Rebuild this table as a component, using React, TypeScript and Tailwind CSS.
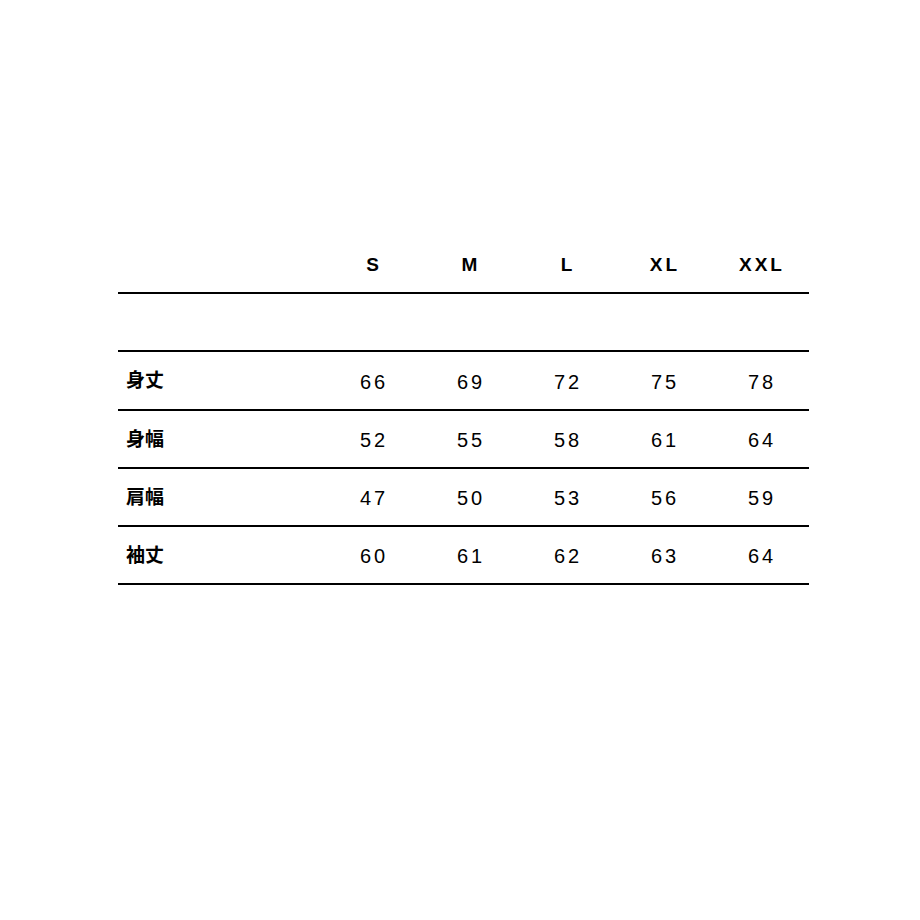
import React from "react";

const sizes = ["S", "M", "L", "XL", "XXL"];
const rows: [string, number[], string][] = [
  ["身丈", [66, 69, 72, 75, 78], "h-[59px]"],
  ["身幅", [52, 55, 58, 61, 64], "h-[58px]"],
  ["肩幅", [47, 50, 53, 56, 59], "h-[58px]"],
  ["袖丈", [60, 61, 62, 63, 64], "h-[58px]"],
];

export default function App() {
  return (
    <div
      className="w-[920px] h-[920px] bg-white text-black"
      style={{ fontFamily: '"Liberation Sans", "Noto Sans CJK JP", sans-serif' }}
    >
      <div className="pt-[236px] pl-[118px]">
        <div className="w-[691px]">
          <div className="flex h-[58px] items-center border-b-2 border-black pt-[2px]">
            <div className="w-[206px]" />
            {sizes.map((s) => (
              <div key={s} className="w-[97px] text-center text-[19px] font-bold tracking-[3px] pl-[3px]">
                {s}
              </div>
            ))}
          </div>
          <div className="h-[58px] border-b-2 border-black" />
          {rows.map(([label, vals, h]) => (
            <div key={label} className={`flex ${h} items-center border-b-2 border-black pt-[2px]`}>
              <div className="w-[206px] pl-[8px] text-[19px] font-bold">{label}</div>
              {vals.map((v, i) => (
                <div key={i} className="w-[97px] text-center text-[20px] tracking-[3px] pl-[3px]">
                  {v}
                </div>
              ))}
            </div>
          ))}
        </div>
      </div>
    </div>
  );
}
